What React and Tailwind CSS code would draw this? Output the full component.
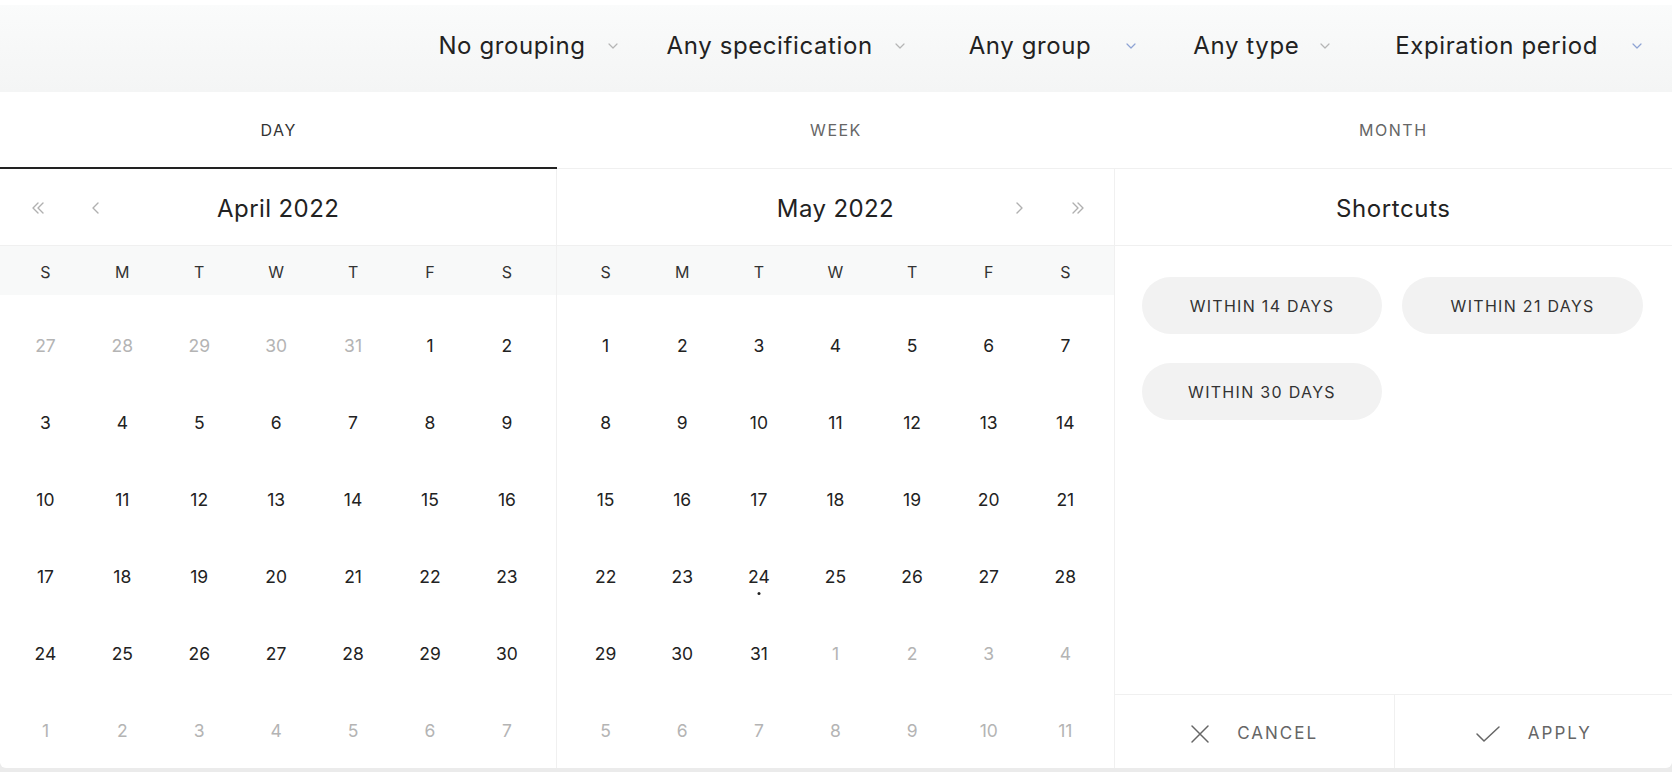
import React from "react";

const FONT = { fontFamily: "Inter, 'Noto Sans', sans-serif" };

function Chevron({ color }) {
  return (
    <svg width="10" height="6" viewBox="0 0 10 6" fill="none">
      <path d="M1 1l4 4 4-4" stroke={color} strokeWidth="1.2" strokeLinecap="round" strokeLinejoin="round" />
    </svg>
  );
}

function NavIcon({ dir, double }) {
  const flip = dir === "right" ? "scale(-1,1) translate(-16,0)" : "";
  return (
    <svg width="16" height="14" viewBox="0 0 16 14" fill="none">
      <g transform={flip} stroke="#b0b0b0" strokeWidth="1.4" strokeLinecap="round" strokeLinejoin="round">
        {double ? (
          <>
            <path d="M8 2L3 7l5 5" />
            <path d="M13 2L8 7l5 5" />
          </>
        ) : (
          <path d="M10 2L5 7l5 5" />
        )}
      </g>
    </svg>
  );
}

const filters = [
  { label: "No grouping", gap: "ml-[22px]", after: "mr-[49px]", color: "#b5b5b5" },
  { label: "Any specification", gap: "ml-[22px]", after: "mr-[64px]", color: "#b5b5b5" },
  { label: "Any group", gap: "ml-[35px]", after: "mr-[57px]", color: "#8ea3d4" },
  { label: "Any type", gap: "ml-[21px]", after: "mr-[65px]", color: "#b5b5b5" },
  { label: "Expiration period", gap: "ml-[34px]", after: "mr-0", color: "#8ea3d4" },
];

const weekdays = ["S", "M", "T", "W", "T", "F", "S"];

const range = (a, b) => Array.from({ length: b - a + 1 }, (_, i) => a + i);

const april = [
  ...range(27, 31).map((d) => ({ d, muted: true })),
  ...range(1, 30).map((d) => ({ d })),
  ...range(1, 7).map((d) => ({ d, muted: true })),
];

const may = [
  ...range(1, 31).map((d) => ({ d, today: d === 24 })),
  ...range(1, 11).map((d) => ({ d, muted: true })),
];

function Month({ title, days, left, pad }) {
  return (
    <div className="flex flex-col border-r border-[#f0f0f0]">
      <div className="h-[77px] shrink-0 flex items-center border-b border-[#f0f0f0] relative">
        {left && (
          <div className="flex items-center pl-[30px] pt-[2px] gap-[42px]">
            <NavIcon dir="left" double />
            <NavIcon dir="left" />
          </div>
        )}
        <div className="absolute inset-0 pt-[3px] flex items-center justify-center text-[24px] tracking-[0.4px] text-[#222]">{title}</div>
        {!left && (
          <div className="ml-auto flex items-center pr-[28px] pt-[2px] gap-[43px]">
            <NavIcon dir="right" />
            <NavIcon dir="right" double />
          </div>
        )}
      </div>
      <div className={`h-[49px] shrink-0 pt-[2px] bg-[#f8f9f9] grid grid-cols-7 items-center ${pad}`}>
        {weekdays.map((w, i) => (
          <div key={i} className="text-center text-[16px] text-[#333]">{w}</div>
        ))}
      </div>
      <div className={`grid grid-cols-7 pt-[13px] ${pad}`}>
        {days.map((c, i) => (
          <div key={i} className="h-[77px] flex items-center justify-center relative">
            <span className={`text-[17.5px] ${c.muted ? "text-[#b4b4b4]" : "text-[#222]"}`}>{c.d}</span>
            {c.today && <span className="absolute left-1/2 top-[53px] -translate-x-1/2 w-[3px] h-[3px] rounded-full bg-[#222]" />}
          </div>
        ))}
      </div>
    </div>
  );
}

export default function App() {
  return (
    <div className="w-full h-[772px] bg-[#ebebeb] flex flex-col overflow-hidden" style={FONT}>
      <div className="h-[92px] shrink-0 bg-white">
        <div className="mt-[5px] h-[87px] bg-gradient-to-b from-[#fafbfb] to-[#f4f5f5] flex items-center justify-end pr-[30px] pb-[6px]">
          {filters.map((f) => (
            <div key={f.label} className={`flex items-center ${f.after}`}>
              <span className="text-[24px] tracking-[0.6px] text-[#222]">{f.label}</span>
              <span className={`${f.gap} flex`}><Chevron color={f.color} /></span>
            </div>
          ))}
        </div>
      </div>
      <div className="h-[676px] shrink-0 bg-white rounded-b-[6px] flex flex-col overflow-hidden">
        <div className="h-[77px] shrink-0 grid grid-cols-3 border-b border-[#f0f0f0]">
          <div className="flex items-center justify-center text-[16px] tracking-[1.5px] text-[#333] border-b-2 border-[#222] -mb-px">DAY</div>
          <div className="flex items-center justify-center text-[16px] tracking-[1.5px] text-[#666]">WEEK</div>
          <div className="flex items-center justify-center text-[16px] tracking-[1.5px] text-[#666]">MONTH</div>
        </div>
        <div className="flex-1 min-h-0 grid grid-cols-3">
          <Month title="April 2022" days={april} left pad="pl-[7px] pr-[11px]" />
          <Month title="May 2022" days={may} pad="pl-[10px] pr-[10px]" />
          <div className="flex flex-col min-h-0">
            <div className="h-[77px] shrink-0 pt-[3px] flex items-center justify-center border-b border-[#f0f0f0] text-[24px] tracking-[0.6px] text-[#222]">Shortcuts</div>
            <div className="flex-1 pl-[27px] pr-[29px] pt-[31px]">
              <div className="grid grid-cols-2 gap-x-[20px] gap-y-[29px]">
                {["WITHIN 14 DAYS", "WITHIN 21 DAYS", "WITHIN 30 DAYS"].map((s) => (
                  <div key={s} className="h-[57px] rounded-full bg-[#f2f2f2] flex items-center justify-center text-[16px] tracking-[1.3px] text-[#333]">{s}</div>
                ))}
              </div>
            </div>
            <div className="h-[76px] shrink-0 border-t border-[#f0f0f0] grid grid-cols-[280px_1fr]">
              <div className="flex items-center justify-center pt-[2px] gap-[27px] border-r border-[#f0f0f0] text-[17px] tracking-[2px] text-[#666]">
                <svg width="20" height="20" viewBox="0 0 20 20" fill="none"><path d="M2 2l16 16M18 2L2 18" stroke="#666" strokeWidth="1.5" strokeLinecap="round" /></svg>
                CANCEL
              </div>
              <div className="flex items-center justify-center pt-[2px] gap-[27px] text-[17px] tracking-[2px] text-[#666]">
                <svg width="26" height="18" viewBox="0 0 26 18" fill="none"><path d="M2 9l7 7L24 2" stroke="#666" strokeWidth="1.5" strokeLinecap="round" strokeLinejoin="round" /></svg>
                APPLY
              </div>
            </div>
          </div>
        </div>
      </div>
    </div>
  );
}
